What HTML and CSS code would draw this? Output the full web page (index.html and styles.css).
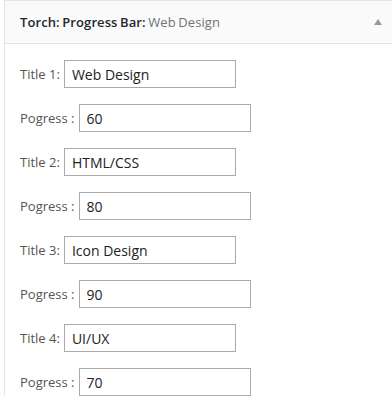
FILE: index.html
```html
<!DOCTYPE html>
<html>
<head>
<meta charset="utf-8">
<link rel="stylesheet" href="styles.css">
</head>
<body>
<div class="widget">
  <div class="widget-top">
    <h3 class="widget-title">Torch: Progress Bar: <span class="sub">Web Design</span></h3>
    <span class="arrow"></span>
  </div>
  <div class="widget-inside">
    <div class="row"><label class="lbl">Title 1:</label><input class="field" type="text" value="Web Design"></div>
    <div class="row"><label class="lbl">Pogress :</label><input class="field" type="text" value="60"></div>
    <div class="row"><label class="lbl">Title 2:</label><input class="field" type="text" value="HTML/CSS"></div>
    <div class="row"><label class="lbl">Pogress :</label><input class="field" type="text" value="80"></div>
    <div class="row"><label class="lbl">Title 3:</label><input class="field" type="text" value="Icon Design"></div>
    <div class="row"><label class="lbl">Pogress :</label><input class="field" type="text" value="90"></div>
    <div class="row"><label class="lbl">Title 4:</label><input class="field" type="text" value="UI/UX"></div>
    <div class="row"><label class="lbl">Pogress :</label><input class="field" type="text" value="70"></div>
  </div>
</div>
</body>
</html>
```
FILE: styles.css
```css
* { box-sizing: border-box; }
html, body { margin: 0; padding: 0; background: #fff; }
body { font-family: "Open Sans", "Noto Sans", sans-serif; color: #444; }
.widget {
  margin-left: 4px;
  border-left: 1px solid #e5e5e5;
  border-top: 1px solid #e5e5e5;
  background: #fff;
}
.widget-top {
  height: 43px;
  background: #fafafa;
  border-bottom: 1px solid #e5e5e5;
  display: flex;
  align-items: center;
  justify-content: space-between;
  padding: 0 10px 0 15px;
}
.widget-title {
  margin: 0;
  font-size: 13px;
  font-weight: 600;
  color: #23282d;
  letter-spacing: 0.1px;
  word-spacing: -1px;
}
.sub { color: #6f7478; font-weight: 400; }
.arrow {
  width: 0; height: 0;
  border-left: 4px solid transparent;
  border-right: 4px solid transparent;
  border-bottom: 6px solid #999;
}
.widget-inside { padding: 16px 0 0 15px; }
.row { display: flex; align-items: center; height: 28px; margin-bottom: 16px; }
.lbl { font-size: 13px; color: #555; margin-right: 4px; }
.field {
  width: 172px;
  height: 28px;
  border: 1px solid #aaa;
  padding: 0 7px;
  font-family: "Open Sans", "Noto Sans", sans-serif;
  font-size: 14px;
  color: #222;
  background: #fff;
  outline: none;
}
```
